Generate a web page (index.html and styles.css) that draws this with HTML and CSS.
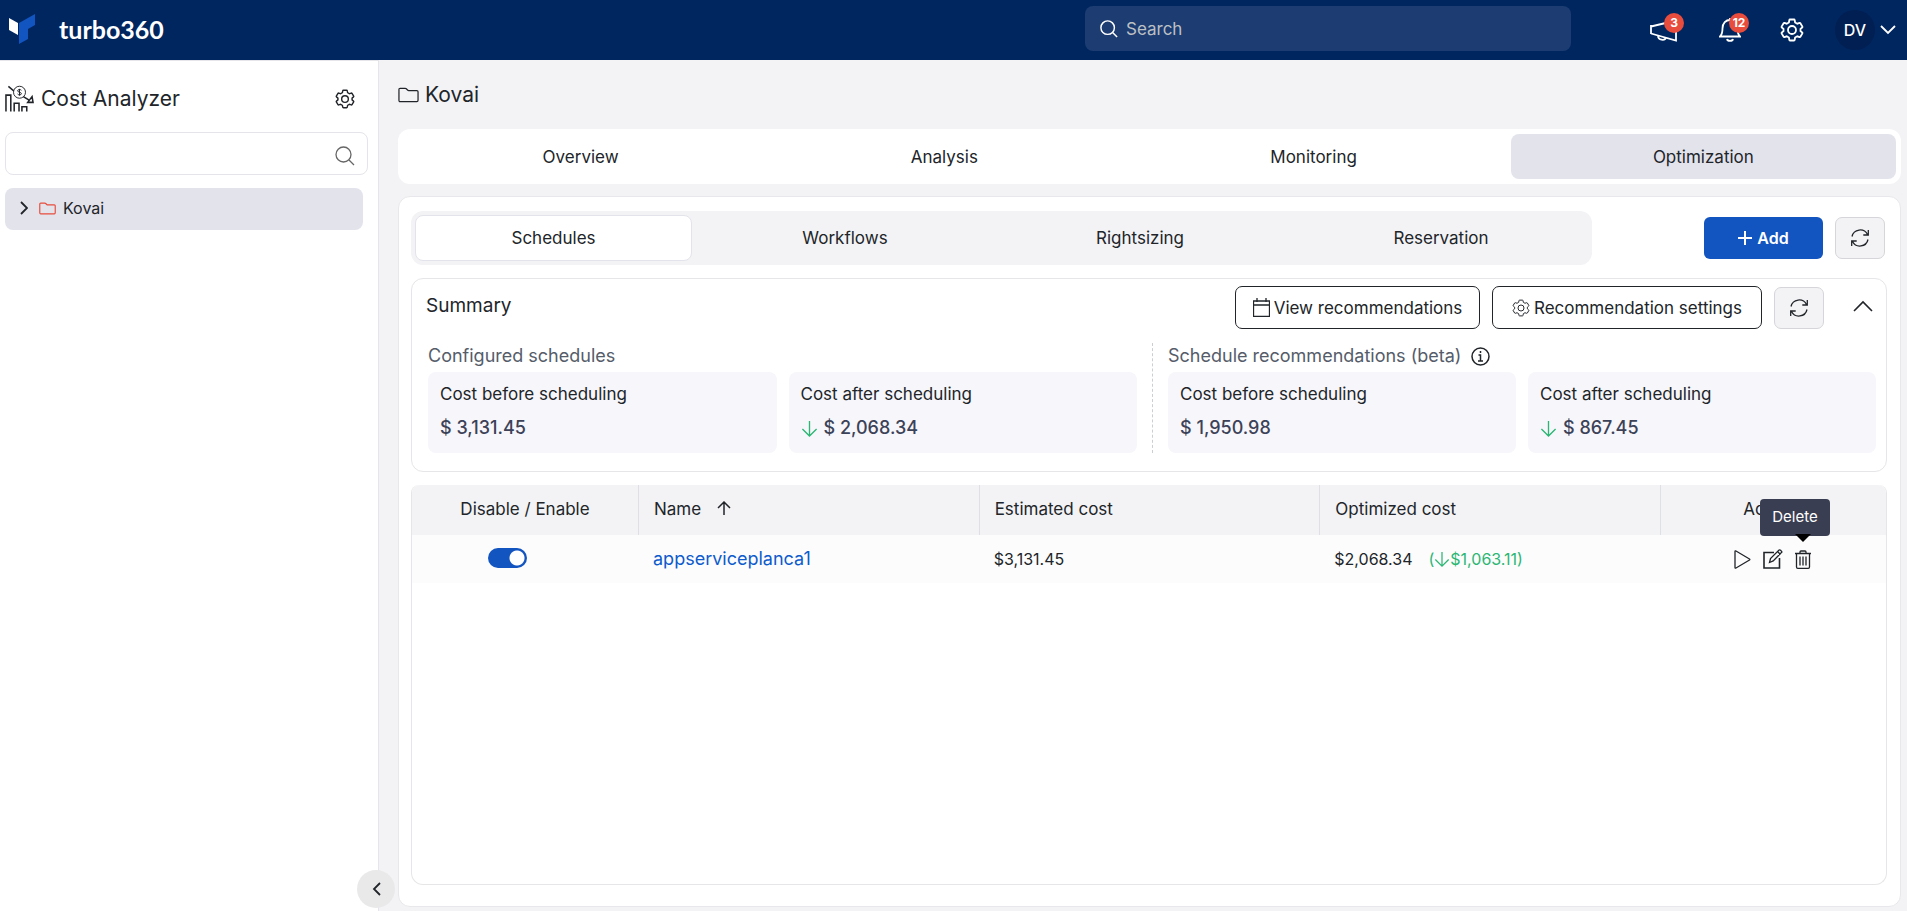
FILE: index.html
```html
<!DOCTYPE html>
<html lang="en">
<head>
<meta charset="utf-8">
<title>turbo360 - Cost Analyzer</title>
<link rel="stylesheet" href="styles.css">
</head>
<body>
<svg class="sprite" aria-hidden="true">
  <symbol id="gear" viewBox="0 0 24 24"><path d="M10 1.500h4q.6 0 .7.600l.4 2.300 2.200 1.300 2.200-.800q.6-.2.900.3l2 3.400q.3.500-.2.900l-1.700 1.400v2.200l1.700 1.400q.5.400.2.900l-2 3.400q-.3.500-.9.300l-2.200-.800-2.200 1.300-.4 2.300q-.1.600-.7.600h-4q-.6 0-.7-.600l-.4-2.300-2.200-1.300-2.200.800q-.6.2-.9-.3l-2-3.400q-.3-.5.200-.900l1.700-1.400v-2.200L1.800 9.500q-.5-.4-.2-.9l2-3.400q.3-.5.900-.3l2.200.800 2.200-1.300.4-2.300q.1-.6.700-.6z"/><circle cx="12" cy="12" r="4"/></symbol>
  <symbol id="folder" viewBox="0 0 22 16"><path d="M1 13.500V2.200Q1 1 2.200 1h5.300q.7 0 1.200.5l1.300 1.300q.5.5 1.200.5h8.600q1.200 0 1.200 1.200v9q0 1.500-1.200 1.500H2.200Q1 15 1 13.500z"/></symbol>
  <symbol id="search" viewBox="0 0 20 20"><circle cx="8.500" cy="8.500" r="7.500"/><path d="M14 14l5 5"/></symbol>
  <symbol id="refresh" viewBox="0 0 20 20"><path d="M2 8.500A8.300 8.300 0 0 1 17.500 6.500M18.300 2v5h-5M18 11.500A8.300 8.300 0 0 1 2.500 13.500M1.700 18v-5h5"/></symbol>
  <symbol id="down" viewBox="0 0 18 18"><path d="M9 1v16M1.500 9.500L9 17l7.500-7.500"/></symbol>
</svg>

<header class="topbar">
  <a class="brand" href="#">
    <svg class="brand-mark" viewBox="0 0 28 30"><path fill="#fff" d="M1 4l9 5v12l-9-5z"/><path fill="#1254c0" d="M11 9l16-9v11l-7 4v10l-9 5z"/></svg>
    <span>turbo360</span>
  </a>
  <label class="global-search">
    <svg class="icon search-icon"><use href="#search"/></svg>
    <input type="text" placeholder="Search" aria-label="Search">
  </label>
  <nav class="top-actions" aria-label="Account">
    <button class="top-button" aria-label="Announcements">
      <svg class="icon" width="28" height="24" viewBox="0 0 28 24"><path d="M1 7v9M1 8.500l25-6v20L1 15.500M8 17.500c0 5 7 5.500 8 2"/></svg>
      <span class="badge">3</span>
    </button>
    <button class="top-button bell" aria-label="Notifications">
      <svg class="icon" width="22" height="24" viewBox="0 0 22 24"><path d="M1 18.500h20c-2-2-2.500-4-2.500-8C18.500 5 15 2 11 2s-7.500 3-7.500 8.500c0 4-.5 6-2.500 8zM11 2V0M8 21c.5 2.500 5.500 2.500 6 0"/></svg>
      <span class="badge">12</span>
    </button>
    <button class="top-button settings" aria-label="Settings"><svg class="icon" width="24" height="24"><use href="#gear"/></svg></button>
    <button class="user" aria-label="User menu DV"><span class="avatar">DV</span><svg class="icon" width="16" height="10" viewBox="0 0 16 10"><path d="M1 1l7 7 7-7"/></svg></button>
  </nav>
</header>

<div class="shell">
  <aside class="sidebar">
    <div class="side-head">
      <svg class="icon cost-icon" viewBox="0 0 30 28"><path d="M1 27V10h5v17M9.500 27v-8.500h5V27M17.500 27v-5h5v5M3.500 1l5.500 4.500M19 11.500l5.500 3.500M29 17.500l-1-6-4.500 6z"/><circle class="fine" cx="15" cy="7" r="6.200"/><path class="fine" d="M17 5c-.5-1-4-1.200-4 .5S17 6.800 17 8.500s-3.500 1.500-4 .3M15 3.500v7"/></svg>
      <h1>Cost Analyzer</h1>
      <button class="plain" aria-label="Cost Analyzer settings"><svg class="icon" width="20" height="20"><use href="#gear"/></svg></button>
    </div>
    <label class="side-search"><input type="text" aria-label="Search cost groups"><svg class="icon" width="20" height="20"><use href="#search"/></svg></label>
    <button class="tree-item">
      <svg class="icon thick" width="8" height="14" viewBox="0 0 8 14"><path d="M1 1l6 6-6 6"/></svg>
      <svg class="icon red-folder" width="17" height="13"><use href="#folder"/></svg>
      <span>Kovai</span>
    </button>
    <button class="collapse" aria-label="Collapse sidebar"><svg class="icon thick" width="9" height="14" viewBox="0 0 9 14"><path d="M8 1L2 7l6 6"/></svg></button>
  </aside>

  <main class="main">
    <h2 class="crumb"><svg class="icon" width="21" height="16"><use href="#folder"/></svg>Kovai</h2>
    <nav class="tabs" aria-label="Sections">
      <button>Overview</button><button>Analysis</button><button>Monitoring</button><button class="active">Optimization</button>
    </nav>

    <section class="panel">
      <div class="toolbar">
        <nav class="subtabs" aria-label="Optimization">
          <button class="active">Schedules</button><button>Workflows</button><button>Rightsizing</button><button>Reservation</button>
        </nav>
        <div class="tools">
          <button class="add"><svg class="icon" width="14" height="14" viewBox="0 0 14 14"><path d="M7 0v14M0 7h14"/></svg>Add</button>
          <button class="square" aria-label="Refresh schedules"><svg class="icon" width="20" height="20"><use href="#refresh"/></svg></button>
        </div>
      </div>

      <section class="summary">
        <div class="summary-head">
          <h3>Summary</h3>
          <button class="outline"><svg class="icon" width="17" height="19" viewBox="0 0 17 19"><path d="M.5 3h16v15.500H.5zM.5 7h16M4 0v4M13 0v4"/></svg>View recommendations</button>
          <button class="outline wide"><svg class="icon" width="18" height="18"><use href="#gear"/></svg>Recommendation settings</button>
          <button class="square" aria-label="Refresh summary"><svg class="icon" width="20" height="20"><use href="#refresh"/></svg></button>
          <button class="plain fold" aria-label="Collapse summary"><svg class="icon" width="20" height="12" viewBox="0 0 20 12"><path d="M1 11l9-9 9 9"/></svg></button>
        </div>
        <div class="groups">
          <div class="group">
            <h4>Configured schedules</h4>
            <div class="cards">
              <div class="card"><span>Cost before scheduling</span><strong>$ 3,131.45</strong></div>
              <div class="card"><span>Cost after scheduling</span><strong><svg class="icon green" width="17" height="17"><use href="#down"/></svg>$ 2,068.34</strong></div>
            </div>
          </div>
          <div class="group">
            <h4>Schedule recommendations (beta)<svg class="icon info" width="19" height="19" viewBox="0 0 19 19"><circle cx="9.500" cy="9.500" r="8.500"/><path d="M7.500 8h2v6M7 14h5M9.500 4v2"/></svg></h4>
            <div class="cards">
              <div class="card"><span>Cost before scheduling</span><strong>$ 1,950.98</strong></div>
              <div class="card"><span>Cost after scheduling</span><strong><svg class="icon green" width="17" height="17"><use href="#down"/></svg>$ 867.45</strong></div>
            </div>
          </div>
        </div>
      </section>

      <div class="table-box">
        <table>
          <colgroup><col class="c-toggle"><col class="c-data"><col class="c-data"><col class="c-data"><col class="c-actions"></colgroup>
          <thead>
            <tr><th class="center">Disable / Enable</th><th>Name<svg class="icon sort" width="14" height="14" viewBox="0 0 14 14"><path d="M7 14V1M1 7l6-6 6 6"/></svg></th><th>Estimated cost</th><th>Optimized cost</th><th class="center">Actions</th></tr>
          </thead>
          <tbody>
            <tr>
              <td class="center"><input class="toggle" type="checkbox" checked aria-label="Enable appserviceplanca1"></td>
              <td><a href="#">appserviceplanca1</a></td>
              <td>$3,131.45</td>
              <td>$2,068.34<span class="saving">(<svg class="icon green" width="16" height="16"><use href="#down"/></svg>$1,063.11)</span></td>
              <td>
                <div class="row-actions">
                  <button class="plain" aria-label="Run"><svg class="icon" width="17" height="19" viewBox="0 0 17 19"><path d="M1 1.500q0-1 1-.5l13.500 8q.7.500 0 1L2 18q-1 .5-1-.5z"/></svg></button>
                  <button class="plain" aria-label="Edit"><svg class="icon" width="20" height="20" viewBox="0 0 20 20"><path class="mid" d="M11 3.500H1v15.500h15.500V9"/><path d="M6.500 13.500l1-4 8.500-8.500q1.500-.5 3 2l-8.800 8.900zM14.500 2.500l3 3"/></svg></button>
                  <button class="plain trash" aria-label="Delete"><svg class="icon" width="16" height="19" viewBox="0 0 16 19"><path d="M0 3.500h16M1.500 3.500v13.500q0 1.300 1.300 1.300h10.400q1.300 0 1.300-1.300V3.500M5 3.500V2q0-1 1-1h4q1 0 1 1v1.500M5 6.500v9M8 6.500v9M11 6.500v9"/></svg><span class="tip" role="tooltip">Delete</span></button>
                </div>
              </td>
            </tr>
          </tbody>
        </table>
      </div>
    </section>
  </main>
</div>
</body>
</html>
```

FILE: styles.css
```css
* { box-sizing: border-box; }

body {
  margin: 0;
  min-height: 100vh;
  display: flex;
  flex-direction: column;
  background: #f3f3f6;
  color: #212529;
  font: 400 17px/24px Inter, "Open Sans", sans-serif;
}

button, input { font: inherit; color: inherit; }
button { padding: 0; border: 0; background: none; cursor: pointer; }
h1, h2, h3, h4 { margin: 0; font-weight: 400; }

.sprite { display: none; }
.icon { flex: none; fill: none; stroke: currentColor; stroke-width: 1.3; }
.thick { stroke-width: 1.8; }
.mid { stroke-width: 1.6; }
.fine { stroke-width: 1; }
.green { color: #2bb673; stroke-width: 1.4; }
.plain { display: flex; }
.center { text-align: center; }

/* Top bar */
.topbar {
  height: 60px;
  display: flex;
  align-items: center;
  background: #002660;
  color: #fff;
}
.brand {
  display: flex;
  align-items: center;
  gap: 23px;
  margin-right: auto;
  padding: 0 0 3px 8px;
  color: #fff;
  font: 700 25px/28px Lato, sans-serif;
  text-decoration: none;
}
.brand-mark { width: 28px; height: 30px; }
.global-search {
  width: 486px;
  height: 45px;
  margin-bottom: 3px;
  padding: 0 15px;
  display: flex;
  align-items: center;
  gap: 6px;
  border-radius: 8px;
  background: #1c3c72;
}
.search-icon { width: 18px; height: 18px; stroke-width: 1.6; }
.global-search input {
  flex: 1;
  border: 0;
  outline: 0;
  background: none;
}
.global-search input::placeholder { color: #bcc0c4; opacity: 1; }
.top-actions { display: flex; align-items: center; margin-left: 79px; padding-right: 11px; }
.top-actions .icon { stroke-width: 1.8; }
.top-button { position: relative; display: flex; width: 28px; }
.bell { margin-left: 41px; width: 22px; }
.settings { margin-left: 39px; width: 24px; }
.badge {
  position: absolute;
  top: -5px;
  left: 14px;
  width: 20px;
  height: 20px;
  border-radius: 50%;
  background: #e74c3c;
  font-size: 12px;
  line-height: 20px;
  font-weight: 700;
}
.bell .badge { left: 10px; }
.user { display: flex; align-items: center; gap: 5px; margin-left: 31px; }
.avatar { width: 40px; height: 40px; border-radius: 50%; background: #011f52; font-size: 16px; font-weight: 500; line-height: 40px; }

/* Sidebar */
.shell { flex: 1; display: flex; }
.sidebar {
  position: relative;
  flex: none;
  width: 379px;
  padding: 24px 10px 0 5px;
  border-top: 1px solid #e6e6ea;
  border-right: 1px solid #e6e6ea;
  background: #fff;
}
.side-head { display: flex; align-items: center; gap: 7px; height: 28px; margin-bottom: 19px; padding-right: 13px; }
.cost-icon { width: 29px; height: 28px; stroke-width: 1.6; }
h1 { flex: 1; font-size: 21px; line-height: 28px; }
.side-head .plain .icon { stroke-width: 1.7; }
.side-search {
  height: 43px;
  padding: 5px 12px 0;
  display: flex;
  align-items: center;
  border: 1px solid #e4e4ea;
  border-radius: 8px;
  color: #666;
}
.side-search input { flex: 1; border: 0; outline: 0; background: none; }
.tree-item {
  width: 358px;
  max-width: 100%;
  height: 42px;
  margin-top: 13px;
  padding: 0 0 2px 15px;
  display: flex;
  align-items: center;
  border-radius: 8px;
  background: #e3e3ec;
  font-size: 16px;
}
.red-folder { margin: 0 7px 0 11px; color: #e74c3c; stroke-width: 1.5; }
.collapse {
  position: absolute;
  right: -17px;
  bottom: 3px;
  width: 38px;
  height: 38px;
  display: flex;
  align-items: center;
  justify-content: center;
  border-radius: 50%;
  background: #e9e9e9;
}

/* Main area */
.main { flex: 1; min-width: 0; display: flex; flex-direction: column; padding: 23px 6px 4px 19px; }
.crumb { display: flex; align-items: center; gap: 6px; height: 24px; font-size: 21px; }
.tabs, .subtabs { display: grid; border-radius: 12px; }
.tabs button, .subtabs button { border-radius: 8px; }
.tabs {
  grid-template-columns: 355fr 344fr 366fr 385fr;
  height: 55px;
  margin-top: 22px;
  padding: 5px;
  gap: 14px;
  background: #fff;
}
.tabs .active { background: #e3e3ec; }

.panel {
  flex: 1;
  display: flex;
  flex-direction: column;
  margin-top: 12px;
  padding: 14px 13px 21px 12px;
  border: 1px solid #e8e8ec;
  border-radius: 12px;
  background: #fff;
}
.toolbar { display: flex; justify-content: space-between; align-items: center; padding-right: 2px; }
.subtabs {
  grid-template-columns: 277fr 282fr 284fr 294fr;
  flex: 0 1 1181px;
  height: 54px;
  padding: 4px;
  gap: 12px;
  background: #f3f3f6;
}
.subtabs .active { border: 1px solid #e3e3ec; background: #fff; }
.tools { display: flex; gap: 12px; }
.add {
  width: 119px;
  height: 42px;
  display: flex;
  align-items: center;
  justify-content: center;
  gap: 5px;
  border-radius: 6px;
  background: #1254c0;
  color: #fff;
  font-size: 16px;
  font-weight: 600;
}
.add .icon { stroke-width: 2; }
.square {
  width: 50px;
  height: 42px;
  display: flex;
  align-items: center;
  justify-content: center;
  border: 1px solid #d6d6da;
  border-radius: 7px;
  background: #f3f3f6;
}

/* Summary */
.summary { margin-top: 13px; padding: 7px 10px 18px 16px; border: 1px solid #e6e6e9; border-radius: 12px; }
.summary-head { display: flex; align-items: center; margin-left: -2px; }
h3 { flex: 1; padding-bottom: 4px; font-size: 19px; }
.outline {
  width: 245px;
  height: 43px;
  margin-right: 12px;
  display: flex;
  align-items: center;
  justify-content: center;
  gap: 4px;
  border: 1px solid #212529;
  border-radius: 7px;
}
.wide { width: 270px; }
.fold { margin: 0 3px 0 29px; padding-bottom: 4px; }
.fold .icon { stroke-width: 1.6; }
.groups { display: grid; grid-template-columns: 1fr 1fr; margin-top: 14px; }
.group + .group { padding-left: 15px; border-left: 1px dashed #ccced3; }
.group:first-child { padding-right: 15px; }
h4 { display: flex; align-items: center; gap: 10px; height: 29px; padding-bottom: 3px; color: #555c6a; font-size: 18px; }
.info { color: #212529; stroke-width: 1.5; }
.cards { display: grid; grid-template-columns: 1fr 1fr; gap: 12px; }
.card { height: 81px; padding: 10px 12px; border-radius: 8px; background: #f6f6fb; }
.card span { display: block; }
.card strong { display: flex; align-items: center; gap: 6px; height: 24px; margin-top: 10px; color: #3c4257; font-size: 18px; font-weight: 500; }

/* Schedules table */
.table-box { flex: 1; margin-top: 13px; border: 1px solid #e6e6e9; border-top: 0; border-radius: 8px 8px 12px 12px; }
table { width: 100%; table-layout: fixed; border-collapse: separate; border-spacing: 0; }
.c-toggle, .c-actions { width: 226px; }
th { height: 50px; padding: 0 15px 2px; background: #f3f3f6; font-weight: 400; text-align: left; }
th + th { border-left: 1px solid #dfe0e6; }
th:first-child { border-top-left-radius: 8px; }
th:last-child { border-top-right-radius: 8px; }
th.center { text-align: center; }
td { height: 48px; padding: 0 15px; background: #fcfcfc; }
td:nth-child(3), td:nth-child(4) { font-size: 16px; }
td a { color: #0d5bcc; font-size: 18px; text-decoration: none; }
.sort { margin-left: 16px; stroke-width: 1.5; }
.toggle {
  appearance: none;
  display: block;
  width: 39px;
  height: 20px;
  margin: 0 0 2px 61px;
  border-radius: 10px;
  background: radial-gradient(circle at 29px 10px, #fff 7px, #1254c0 8px);
}
.saving { margin-left: 16px; color: #2bb673; }
.saving .icon { vertical-align: -2px; }
.row-actions { display: flex; align-items: center; gap: 12px; padding-left: 59px; }
.trash { position: relative; }
.tip {
  position: absolute;
  right: -19px;
  bottom: 33px;
  width: 70px;
  height: 37px;
  border-radius: 4px;
  background: #3a3e52;
  color: #fff;
  font-size: 15px;
  line-height: 36px;
}
.tip::after {
  content: "";
  position: absolute;
  right: 19px;
  bottom: -6px;
  border: 8px solid transparent;
  border-top-color: #000;
  border-bottom: 0;
}
```
